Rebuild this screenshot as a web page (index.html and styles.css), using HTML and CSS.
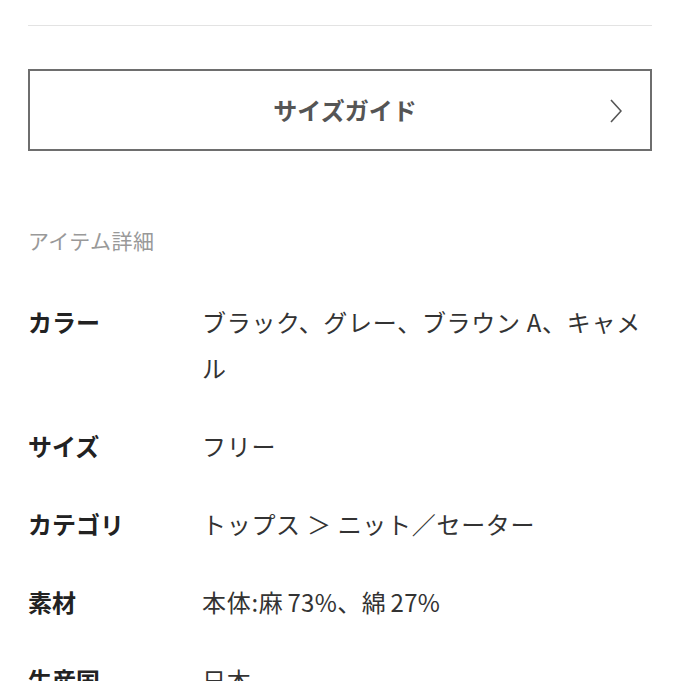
FILE: index.html
```html
<!DOCTYPE html>
<html lang="ja">
<head>
<meta charset="utf-8">
<link rel="stylesheet" href="styles.css">
</head>
<body>
<div class="page">
  <hr class="divider">
  <a class="size-guide" href="#">
    <span class="size-guide-label">サイズガイド</span>
    <svg class="chevron" width="12" height="24" viewBox="0 0 12 24"><path d="M1 1 L11 12 L1 23" fill="none" stroke="#555" stroke-width="1.6"/></svg>
  </a>
  <h2 class="section-title">アイテム詳細</h2>
  <dl class="details">
    <div class="row"><dt>カラー</dt><dd>ブラック、グレー、ブラウン A、キャメル</dd></div>
    <div class="row"><dt>サイズ</dt><dd>フリー</dd></div>
    <div class="row"><dt>カテゴリ</dt><dd>トップス ＞ ニット／セーター</dd></div>
    <div class="row"><dt>素材</dt><dd>本体:麻<span class="latin">73%</span>、綿<span class="latin">27%</span></dd></div>
    <div class="row"><dt>生産国</dt><dd>日本</dd></div>
  </dl>
</div>
</body>
</html>
```
FILE: styles.css
```css
html, body {
  margin: 0;
  padding: 0;
  background: #fff;
}
body {
  font-family: "Noto Sans CJK JP", "Noto Sans", sans-serif;
  color: #333;
}
.page {
  padding: 25px 29px 0 28px;
}
.divider {
  border: 0;
  border-top: 1px solid #e3e3e3;
  margin: 0;
}
.size-guide {
  margin-top: 43px;
  height: 82px;
  box-sizing: border-box;
  border: 2px solid #6e6e6e;
  display: flex;
  align-items: center;
  justify-content: center;
  position: relative;
  text-decoration: none;
}
.size-guide-label {
  font-size: 24px;
  font-weight: bold;
  color: #555;
  padding-left: 10px;
  margin-top: -2px;
}
.chevron {
  position: absolute;
  right: 28px;
  top: 28px;
}
.section-title {
  margin: 74px 0 0;
  font-size: 21px;
  line-height: 30px;
  font-weight: normal;
  color: #999;
  letter-spacing: 0.4px;
}
.details {
  margin: 44px 0 0;
  display: flex;
  flex-direction: column;
  gap: 32px;
}
.row {
  display: grid;
  grid-template-columns: 174px 1fr;
  font-size: 24px;
  line-height: 46px;
}
.row dt {
  font-weight: bold;
  color: #222;
}
.row dd {
  margin: 0;
  color: #333;
  letter-spacing: 0.7px;
}
.latin {
  margin-left: 4px;
  letter-spacing: 0.3px;
}
```
